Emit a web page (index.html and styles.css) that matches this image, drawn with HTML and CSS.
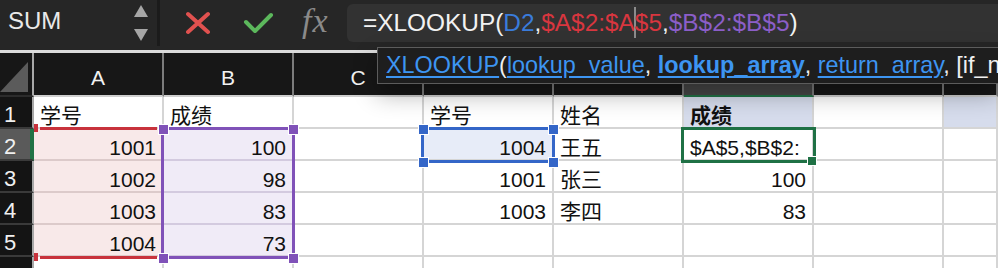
FILE: index.html
```html
<!DOCTYPE html>
<html lang="zh">
<head>
<meta charset="utf-8">
<title>XLOOKUP</title>
<link rel="stylesheet" href="styles.css">
</head>
<body>
<div class="app">
  <div class="fbar">
    <div class="namebox">
      <span class="name">SUM</span>
      <svg class="stepper" width="16" height="38" viewBox="0 0 16 38"><polygon points="1,13 8,1 15,13" fill="#a6a6a6"/><polygon points="1,25 15,25 8,37" fill="#a6a6a6"/></svg>
    </div>
    <div class="divider"></div>
    <div class="tools">
      <svg class="ico-x" width="24" height="24" viewBox="0 0 24 24"><path d="M2 3 L22 21 M22 3 L2 21" stroke="#e0514f" stroke-width="4" stroke-linecap="round" fill="none"/></svg>
      <svg class="ico-ok" width="32" height="24" viewBox="0 0 32 24"><polyline points="4,11 13,20 29,4" stroke="#5cb85c" stroke-width="4" stroke-linecap="round" stroke-linejoin="round" fill="none"/></svg>
      <span class="fx">fx</span>
    </div>
    <div class="formula"><span class="fw">=XLOOKUP(</span><span class="fb">D2</span><span class="fw">,</span><span class="fr">$A$2:$A</span><span class="caret"></span><span class="fr">$5</span><span class="fw">,</span><span class="fp">$B$2:$B$5</span><span class="fw">)</span></div>
  </div>
  <div class="band"></div>

  <div class="sheet">
    <div class="corner"><svg width="28" height="30" viewBox="0 0 28 30"><polygon points="0,30 28,30 28,0" fill="#5b5b5b"/></svg></div>
    <div class="ch">A</div><div class="ch">B</div><div class="ch">C</div><div class="ch"></div><div class="ch"></div><div class="ch ch-act"></div><div class="ch"></div><div class="ch"></div>

    <div class="rh">1</div>
    <div class="c">学号</div><div class="c">成绩</div><div class="c"></div><div class="c">学号</div><div class="c">姓名</div><div class="c hl bold">成绩</div><div class="c"></div><div class="c hl"></div>

    <div class="rh rh-act">2</div>
    <div class="c num rf">1001</div><div class="c num pf">100</div><div class="c"></div><div class="c num bf">1004</div><div class="c">王五</div><div class="c">$A$5,$B$2:</div><div class="c"></div><div class="c"></div>

    <div class="rh">3</div>
    <div class="c num rf">1002</div><div class="c num pf">98</div><div class="c"></div><div class="c num">1001</div><div class="c">张三</div><div class="c num">100</div><div class="c"></div><div class="c"></div>

    <div class="rh">4</div>
    <div class="c num rf">1003</div><div class="c num pf">83</div><div class="c"></div><div class="c num">1003</div><div class="c">李四</div><div class="c num">83</div><div class="c"></div><div class="c"></div>

    <div class="rh">5</div>
    <div class="c num rf">1004</div><div class="c num pf">73</div><div class="c"></div><div class="c"></div><div class="c"></div><div class="c"></div><div class="c"></div><div class="c"></div>

    <div class="rh"></div>
    <div class="c"></div><div class="c"></div><div class="c"></div><div class="c"></div><div class="c"></div><div class="c"></div><div class="c"></div><div class="c"></div>
  </div>

  <!-- range highlights (overlays) -->
  <div class="red-line red-top"></div>
  <div class="red-line red-bot"></div>
  <div class="red-bit red-bit-top"></div>
  <div class="red-bit red-bit-bot"></div>

  <div class="box box-purple"></div>
  <div class="hd hd-p" style="left:158px;top:124px"></div>
  <div class="hd hd-p" style="left:288px;top:124px"></div>
  <div class="hd hd-p" style="left:158px;top:253px"></div>
  <div class="hd hd-p" style="left:288px;top:253px"></div>

  <div class="box box-blue"></div>
  <div class="hd hd-b" style="left:418px;top:124px"></div>
  <div class="hd hd-b" style="left:548px;top:124px"></div>
  <div class="hd hd-b" style="left:418px;top:157px"></div>
  <div class="hd hd-b" style="left:548px;top:157px"></div>

  <div class="box box-active"></div>
  <div class="hd hd-g" style="left:807px;top:156px"></div>

  <div class="tip"><a class="lk">XLOOKUP</a>(<a class="lk">lookup_value</a>, <a class="lk b">lookup_array</a>, <a class="lk">return_array</a>, [if_n</div>
</div>
</body>
</html>
```
FILE: styles.css
```css
html, body {
  margin: 0;
  padding: 0;
  background: #ffffff;
}
body {
  width: 998px;
  height: 268px;
  overflow: hidden;
  font-family: "Liberation Sans", "Noto Sans CJK SC", sans-serif;
}
.app {
  position: relative;
  width: 998px;
  height: 268px;
  overflow: hidden;
}

/* formula bar */
.fbar {
  display: flex;
  height: 50px;
  background: #262626;
}
.namebox {
  width: 157px;
  box-sizing: border-box;
  padding-left: 8px;
  display: flex;
  align-items: flex-start;
}
.name {
  margin-top: 9px;
  font-size: 24px;
  line-height: 24px;
  color: #e9e9e9;
}
.stepper {
  margin-left: auto;
  margin-right: 8px;
  margin-top: 4px;
}
.divider {
  width: 3px;
  height: 46px;
  background: #1b1b1b;
}
.tools {
  width: 187px;
  display: flex;
  align-items: flex-start;
}
.ico-x {
  margin-left: 26px;
  margin-top: 11px;
}
.ico-ok {
  margin-left: 32px;
  margin-top: 11px;
}
.fx {
  margin-left: 28px;
  margin-top: 5px;
  font-family: "Liberation Serif", serif;
  font-style: italic;
  font-size: 34px;
  line-height: 32px;
  color: #8a8a8a;
  letter-spacing: 1px;
}
.formula {
  flex: 1;
  margin-top: 4px;
  height: 38px;
  background: #323232;
  border-radius: 6px 0 0 6px;
  padding-left: 16px;
  font-size: 24.4px;
  line-height: 38px;
  white-space: nowrap;
  overflow: hidden;
}
.fw { color: #f2f2f2; }
.fb { color: #3a7cdb; }
.fr { color: #d8363f; }
.fp { color: #8b5ec8; }
.caret {
  display: inline-block;
  width: 2px;
  height: 31px;
  background: #8c8c8c;
  vertical-align: -7px;
  margin: 0 -1px;
}
.band {
  height: 3px;
  background: #dcdcdc;
}

/* sheet grid */
.sheet {
  display: grid;
  grid-template-columns: 34px repeat(7, 130px) 54px;
  grid-template-rows: 44px repeat(6, 32px);
}
.corner {
  background: #171717;
  border-right: 2px solid #a8a8a8;
  border-bottom: 2px solid #2c2c2c;
  display: flex;
  align-items: flex-start;
  padding-top: 9px;
  box-sizing: border-box;
}
.ch {
  background: #171717;
  border-right: 2px solid #7c7c7c;
  border-bottom: 2px solid #cfcfcf;
  color: #f2f2f2;
  font-size: 21px;
  line-height: 21px;
  display: flex;
  justify-content: center;
  align-items: flex-end;
  padding-bottom: 7px;
  box-sizing: border-box;
}
.ch-act {
  background: #474747;
  border-bottom-color: #217346;
}
.rh {
  background: #141414;
  border-right: 2px solid #a8a8a8;
  border-bottom: 2px solid #3a3a3a;
  color: #f0f0f0;
  font-size: 22px;
  line-height: 23px;
  padding: 6px 0 0 4px;
  box-sizing: border-box;
  overflow: hidden;
}
.rh-act {
  background: #5a5a5a;
  border-right-color: #217346;
  box-shadow: inset -2px 0 0 #217346;
}
.c {
  border-right: 2px solid #d5d5d5;
  border-bottom: 2px solid #d5d5d5;
  padding: 7px 6px 0;
  font-size: 21px;
  line-height: 23px;
  color: #111111;
  white-space: nowrap;
  overflow: hidden;
  box-sizing: border-box;
}
.num { text-align: right; }
.bold { font-weight: bold; }
.hl { background: #d6dcec; }
.rf { background: #f8e9e9; border-bottom-color: #dccaca; }
.pf { background: #f0ebf7; border-bottom-color: #d3cadf; }
.bf { background: #e7ecf8; }

/* overlays */
.red-line {
  position: absolute;
  left: 40px;
  width: 117px;
  height: 3px;
  background: #c8323c;
}
.red-top { top: 127px; }
.red-bot { top: 256px; }
.red-bit {
  position: absolute;
  left: 34px;
  width: 4px;
  height: 8px;
  background: #c8323c;
}
.red-bit-top { top: 124px; }
.red-bit-bot { top: 253px; }

.box {
  position: absolute;
  box-sizing: border-box;
  border: 3px solid;
}
.box-purple {
  left: 161px; top: 127px; width: 134px; height: 132px;
  border-color: #8052b8;
}
.box-blue {
  left: 421px; top: 127px; width: 134px; height: 36px;
  border-color: #3466c8;
}
.box-active {
  left: 681px; top: 127px; width: 135px; height: 36px;
  border-color: #1f7145;
}
.hd {
  position: absolute;
  width: 9px;
  height: 9px;
  border: 1px solid #ffffff;
}
.hd-p { background: #8052b8; }
.hd-b { background: #3466c8; }
.hd-g { width: 8px; height: 8px; background: #1f7145; }

.tip {
  position: absolute;
  left: 377px;
  top: 47px;
  width: 621px;
  height: 37px;
  box-sizing: border-box;
  background: #1e1e1e;
  border: 1px solid #5c5c5c;
  border-right: none;
  box-shadow: 0 10px 24px rgba(0, 0, 0, 0.32);
  padding-left: 8px;
  font-size: 23.4px;
  line-height: 35px;
  color: #f0f0f0;
  white-space: nowrap;
  overflow: hidden;
}
.lk {
  color: #3d95f2;
  text-decoration: underline;
  text-underline-offset: 3px;
}
.lk.b { font-weight: bold; }
```
